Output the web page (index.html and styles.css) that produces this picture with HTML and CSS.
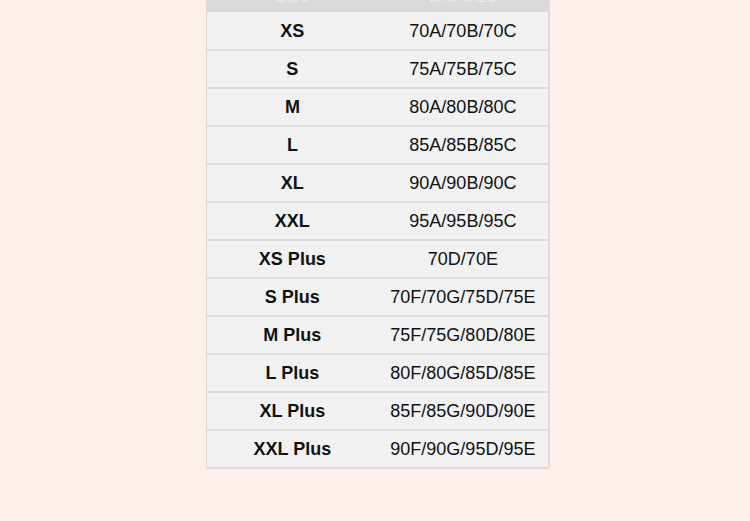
FILE: index.html
```html
<!DOCTYPE html>
<html>
<head>
<meta charset="utf-8">
<link rel="stylesheet" href="styles.css">
</head>
<body>
<div class="page">
  <table class="size-table">
    <thead>
      <tr><th>Size</th><th>Bra Size</th></tr>
    </thead>
    <tbody>
      <tr><td class="size">XS</td><td class="bra">70A/70B/70C</td></tr>
      <tr><td class="size">S</td><td class="bra">75A/75B/75C</td></tr>
      <tr><td class="size">M</td><td class="bra">80A/80B/80C</td></tr>
      <tr><td class="size">L</td><td class="bra">85A/85B/85C</td></tr>
      <tr><td class="size">XL</td><td class="bra">90A/90B/90C</td></tr>
      <tr><td class="size">XXL</td><td class="bra">95A/95B/95C</td></tr>
      <tr><td class="size">XS Plus</td><td class="bra">70D/70E</td></tr>
      <tr><td class="size">S Plus</td><td class="bra">70F/70G/75D/75E</td></tr>
      <tr><td class="size">M Plus</td><td class="bra">75F/75G/80D/80E</td></tr>
      <tr><td class="size">L Plus</td><td class="bra">80F/80G/85D/85E</td></tr>
      <tr><td class="size">XL Plus</td><td class="bra">85F/85G/90D/90E</td></tr>
      <tr><td class="size">XXL Plus</td><td class="bra">90F/90G/95D/95E</td></tr>
    </tbody>
  </table>
</div>
</body>
</html>
```
FILE: styles.css
```css
html, body {
  margin: 0;
  padding: 0;
  background: #fdf0eb;
  height: 100%;
  overflow: hidden;
}
.page {
  padding-left: 206px;
}
.size-table {
  margin-top: -26px;
  width: 344px;
  border-collapse: collapse;
  table-layout: fixed;
  font-family: "Liberation Sans", Arial, sans-serif;
  font-size: 18px;
  color: #111;
  border-left: 1px solid #dadada;
  border-right: 2px solid #dcdcdc;
  border-bottom: 2px solid #dcdcdc;
}
.size-table th {
  height: 32px;
  padding: 6px 0 0;
  background: #d9d9d9;
  color: #e9e9e9;
  font-weight: normal;
  text-align: center;
}
.size-table td {
  height: 35px;
  padding: 1px 0 0;
  background: #f1f1f1;
  text-align: center;
  border-top: 2px solid #dcdcdc;
}
.size-table tbody tr:first-child td {
  border-top: 0;
  height: 36px;
}
.size {
  font-weight: bold;
}
```
